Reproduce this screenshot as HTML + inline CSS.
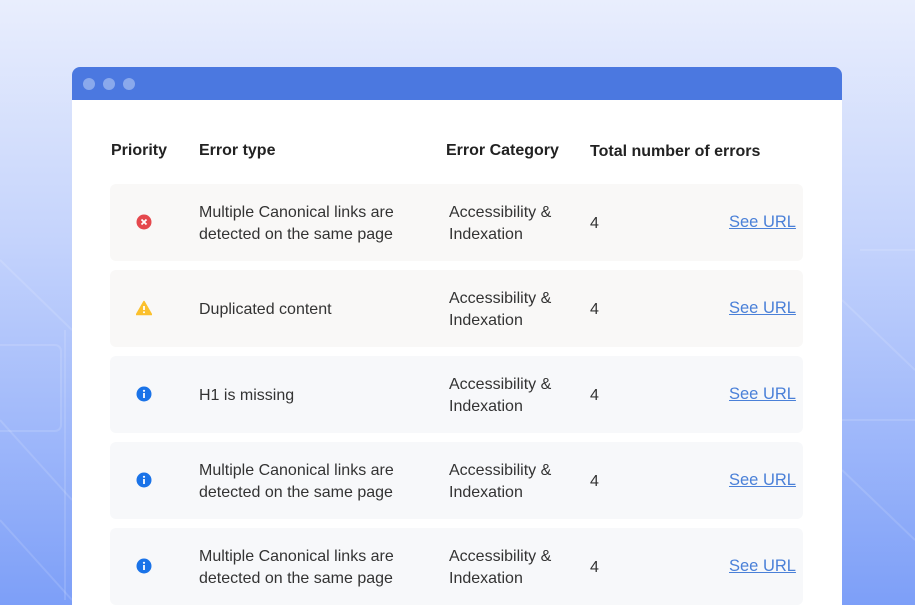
<!DOCTYPE html>
<html style="background:#7d9ff8"><head><style>
*{margin:0;padding:0;box-sizing:border-box}
html,body{width:915px;height:605px;overflow:hidden}
body{font-family:"Liberation Sans",sans-serif;background:linear-gradient(180deg,#e9eefd 0%,#c4d3fc 40%,#7d9ff8 100%);position:relative}
.bg{position:absolute;left:0;top:0}
.win{position:absolute;left:72px;top:67px;width:770px;height:560px;background:#fff;border-radius:8px 8px 0 0;overflow:hidden}
.bar{height:33px;background:#4b78e0;position:relative}
.dot{position:absolute;top:11px;width:12px;height:12px;border-radius:50%;background:#8aa9ec}
.th{position:absolute;top:75px;font-weight:bold;font-size:16px;color:#222}
.row{position:absolute;left:38px;width:693px;height:77px;border-radius:6px}
.t{position:absolute;font-size:16px;color:#333;line-height:22px}
.link{position:absolute;left:619px;top:29px;font-size:16.5px;color:#4a80d8;text-decoration:underline}
.ic{position:absolute;left:26px;top:30px}
</style></head><body>
<svg class="bg" width="915" height="605"><g stroke="#ffffff" stroke-opacity="0.13" fill="none" stroke-width="2"><path d="M0 260 L72 330"/><path d="M0 420 L72 500"/><path d="M0 520 L72 600"/><path d="M0 345 H55 a6 6 0 0 1 6 6 V425 a6 6 0 0 1 -6 6 H0"/><path d="M65 330 V600"/><path d="M842 300 L915 370"/><path d="M842 470 L915 540"/><path d="M860 250 H915"/><path d="M842 420 H915"/></g></svg>
<div class="win">
<div class="bar"><div class="dot" style="left:11px"></div><div class="dot" style="left:31px"></div><div class="dot" style="left:51px"></div></div>
<div class="th" style="left:39px">Priority</div>
<div class="th" style="left:127px">Error type</div>
<div class="th" style="left:374px">Error Category</div>
<div class="th" style="left:518px;top:76px">Total number of errors</div>

<div class="row" style="top:117px;background:#f9f8f7">
<svg class="ic" width="16" height="16"><circle cx="8" cy="8" r="7.5" fill="#e5484d"/><path d="M5.5 5.5L10.5 10.5M10.5 5.5L5.5 10.5" stroke="#fff" stroke-width="1.8"/></svg>
<div class="t" style="left:89px;top:18px">Multiple Canonical links are<br>detected on the same page</div>
<div class="t" style="left:339px;top:18px">Accessibility &amp;<br>Indexation</div>
<div class="t" style="left:480px;top:29px">4</div><div class="link">See URL</div></div>

<div class="row" style="top:203px;background:#f9f8f7">
<svg class="ic" width="16" height="16" style="top:30px"><path d="M8 1.5L15.5 14.5H0.5Z" fill="#fbc02d" stroke="#fbc02d" stroke-linejoin="round" stroke-width="1.5"/><path d="M8 6V10" stroke="#fff" stroke-width="1.8"/><circle cx="8" cy="12.3" r="1" fill="#fff"/></svg>
<div class="t" style="left:89px;top:29px">Duplicated content</div>
<div class="t" style="left:339px;top:18px">Accessibility &amp;<br>Indexation</div>
<div class="t" style="left:480px;top:29px">4</div><div class="link">See URL</div></div>

<div class="row" style="top:289px;background:#f7f8fa">
<svg class="ic" width="16" height="16"><circle cx="8" cy="8" r="7.5" fill="#1a73e8"/><circle cx="8" cy="4.8" r="1.1" fill="#fff"/><path d="M8 7V12" stroke="#fff" stroke-width="1.8"/></svg>
<div class="t" style="left:89px;top:29px">H1 is missing</div>
<div class="t" style="left:339px;top:18px">Accessibility &amp;<br>Indexation</div>
<div class="t" style="left:480px;top:29px">4</div><div class="link">See URL</div></div>

<div class="row" style="top:375px;background:#f7f8fa">
<svg class="ic" width="16" height="16"><circle cx="8" cy="8" r="7.5" fill="#1a73e8"/><circle cx="8" cy="4.8" r="1.1" fill="#fff"/><path d="M8 7V12" stroke="#fff" stroke-width="1.8"/></svg>
<div class="t" style="left:89px;top:18px">Multiple Canonical links are<br>detected on the same page</div>
<div class="t" style="left:339px;top:18px">Accessibility &amp;<br>Indexation</div>
<div class="t" style="left:480px;top:29px">4</div><div class="link">See URL</div></div>

<div class="row" style="top:461px;background:#f7f8fa">
<svg class="ic" width="16" height="16"><circle cx="8" cy="8" r="7.5" fill="#1a73e8"/><circle cx="8" cy="4.8" r="1.1" fill="#fff"/><path d="M8 7V12" stroke="#fff" stroke-width="1.8"/></svg>
<div class="t" style="left:89px;top:18px">Multiple Canonical links are<br>detected on the same page</div>
<div class="t" style="left:339px;top:18px">Accessibility &amp;<br>Indexation</div>
<div class="t" style="left:480px;top:29px">4</div><div class="link">See URL</div></div>
</div>
</body></html>
